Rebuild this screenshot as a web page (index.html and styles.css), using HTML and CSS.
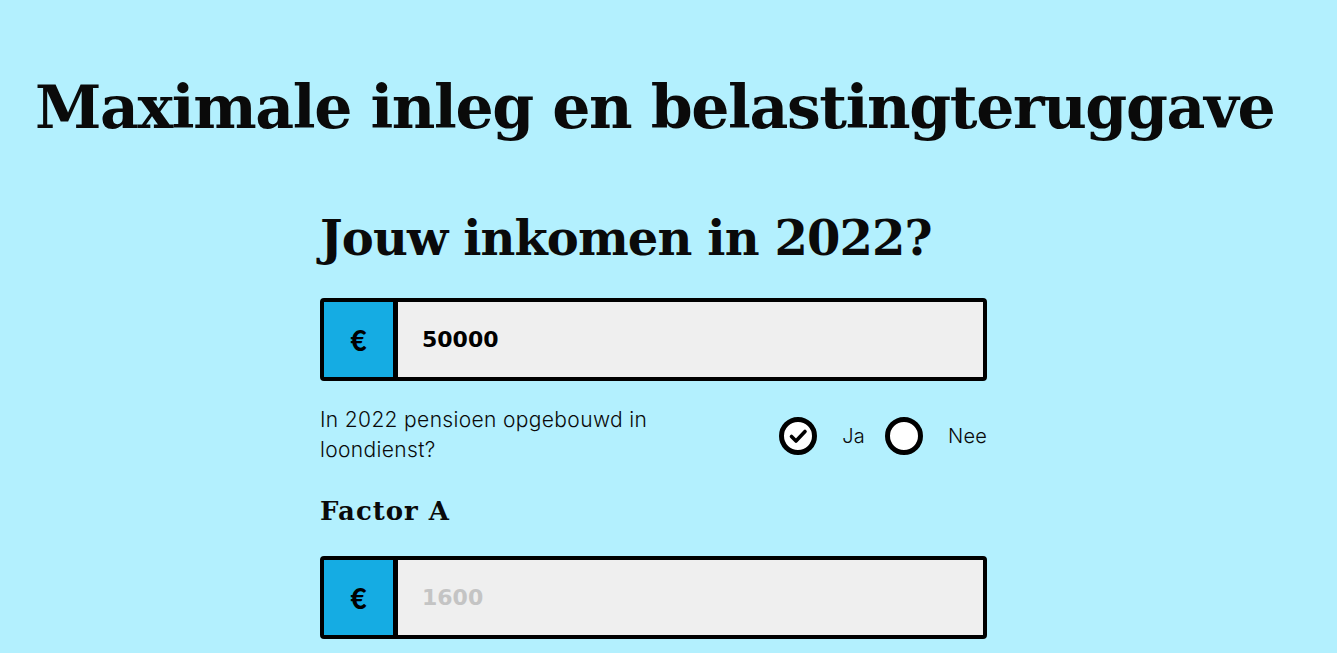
FILE: index.html
```html
<!DOCTYPE html>
<html lang="nl">
<head>
<meta charset="utf-8">
<title>Maximale inleg en belastingteruggave</title>
<link rel="stylesheet" href="styles.css">
</head>
<body>
<main class="page">
  <h1 class="title">Maximale inleg en belastingteruggave</h1>
  <section class="form">
    <h2 class="subtitle">Jouw inkomen in 2022?</h2>
    <div class="field">
      <span class="addon">€</span>
      <input class="input" type="text" value="50000">
    </div>
    <div class="question">
      <p class="question-label">In 2022 pensioen opgebouwd in loondienst?</p>
      <div class="options">
        <span class="radio radio-checked">
          <svg viewBox="0 0 38 38" width="38" height="38"><circle cx="19" cy="19" r="16.5" fill="#fff" stroke="#000" stroke-width="5"/><path d="M12.5 19.5l4.5 4.5 9-9.5" fill="none" stroke="#000" stroke-width="3.6" stroke-linecap="round" stroke-linejoin="round"/></svg>
        </span>
        <span class="option-text">Ja</span>
        <span class="radio">
          <svg viewBox="0 0 38 38" width="38" height="38"><circle cx="19" cy="19" r="16.5" fill="#fff" stroke="#000" stroke-width="5"/></svg>
        </span>
        <span class="option-text">Nee</span>
      </div>
    </div>
    <h3 class="label">Factor A</h3>
    <div class="field">
      <span class="addon">€</span>
      <input class="input" type="text" placeholder="1600">
    </div>
  </section>
</main>
</body>
</html>
```
FILE: styles.css
```css
html, body {
  margin: 0;
  padding: 0;
  background: #b3f0fe;
  color: #0a0a0a;
}
.page {
  padding: 67px 0 0 35px;
}
.title {
  margin: 0;
  font-family: "DejaVu Serif", serif;
  font-weight: 700;
  font-size: 60px;
  line-height: 80px;
  letter-spacing: -1.4px;
}
.form {
  width: 667px;
  margin: 61px 0 0 285px;
}
.subtitle {
  margin: 0 0 30px;
  font-family: "DejaVu Serif", serif;
  font-weight: 700;
  font-size: 48px;
  line-height: 60px;
  letter-spacing: -0.9px;
}
.field {
  display: flex;
  height: 75px;
  border: 4px solid #000;
  border-radius: 4px;
  background: #efefef;
}
.addon {
  width: 69px;
  flex: none;
  display: flex;
  align-items: center;
  justify-content: center;
  background: #15ace3;
  border-right: 5px solid #000;
  font-family: "Lato", sans-serif;
  font-weight: 900;
  font-size: 28px;
  color: #000;
}
.input {
  flex: 1;
  min-width: 0;
  border: 0;
  background: transparent;
  padding: 0 0 0 24px;
  font-family: "DejaVu Sans", sans-serif;
  font-weight: 700;
  font-size: 22px;
  color: #000;
  outline: none;
}
.input::placeholder {
  color: #c4c4c4;
  opacity: 1;
}
.question {
  display: flex;
  justify-content: space-between;
  align-items: center;
  margin-top: 24px;
}
.question-label {
  margin: 0;
  width: 370px;
  font-family: "Inter", sans-serif;
  font-weight: 300;
  font-size: 21px;
  line-height: 30px;
  letter-spacing: 0.35px;
}
.options {
  display: flex;
  align-items: center;
  margin-top: 2px;
}
.radio {
  display: flex;
  width: 38px;
  height: 38px;
}
.option-text {
  font-family: "Inter", sans-serif;
  font-weight: 300;
  font-size: 20px;
  letter-spacing: 0.2px;
  margin-left: 25px;
}
.option-text + .radio {
  margin-left: 20px;
}
.label {
  margin: 28px 0 27px;
  font-family: "DejaVu Serif", serif;
  font-weight: 700;
  font-size: 26px;
  line-height: 36px;
  letter-spacing: 1px;
}
```
